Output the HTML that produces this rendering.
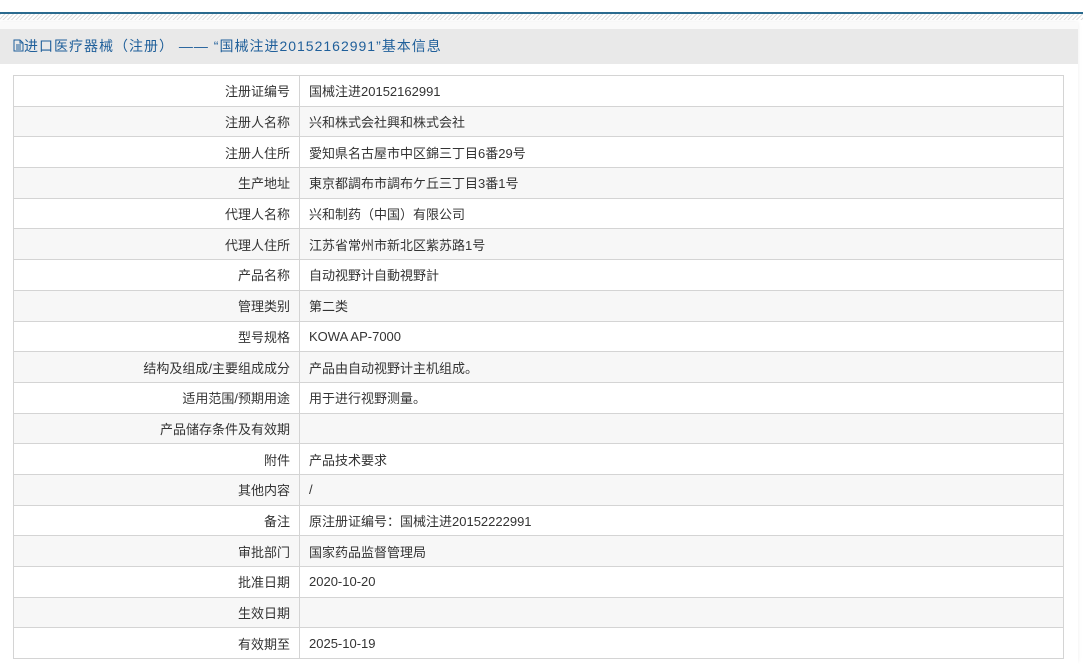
<!DOCTYPE html>
<html><head><meta charset="utf-8"><style>
body{margin:0;background:#fff;font-family:"Liberation Sans","Noto Sans CJK SC",sans-serif;width:1083px;height:657px;overflow:hidden;position:relative}
.line{position:absolute;left:0;top:12px;width:1083px;height:2px;background:#2a6a8e}
.hatch{position:absolute;left:0;top:14px;width:1083px;height:6px;background:repeating-linear-gradient(135deg,#ddd 0 1px,#fff 1px 3px)}
.panel{position:absolute;left:0;top:22px;width:1078px;height:640px;background:#fafafa;box-shadow:0 0 4px #eee}
.head{position:absolute;left:0;top:29px;width:1078px;height:35px;background:#e9e9e9;color:#1f5f9a;font-size:14px;line-height:35px;padding-left:13px;box-sizing:border-box;letter-spacing:1px;white-space:pre}
.wrap{position:absolute;left:0;top:64px;width:1078px;height:600px;background:#fff}
table{position:absolute;left:13px;top:75px;width:1051px;border-collapse:collapse;font-size:13px;color:#333}
td{border:1px solid #d4d4d4;height:30.7px;padding:0 9px;box-sizing:border-box}
td.l{width:286px;text-align:right}
tr:nth-child(even) td{background:#f7f7f7}
</style></head><body>
<div class="line"></div><div class="hatch"></div><div class="panel"></div>
<div class="head"><svg width="11" height="13" viewBox="0 0 11 13" style="vertical-align:-1px"><path d="M1 1h6l3 3v8H1z M7 1v3h3 M3 6h5M3 8h5M3 10h5" fill="none" stroke="#1f5f9a" stroke-width="1"/></svg>进口医疗器械（注册） —— “国械注进20152162991”基本信息</div>
<div class="wrap"></div>
<table>
<tr><td class="l">注册证编号</td><td>国械注进20152162991</td></tr>
<tr><td class="l">注册人名称</td><td>兴和株式会社興和株式会社</td></tr>
<tr><td class="l">注册人住所</td><td>愛知県名古屋市中区錦三丁目6番29号</td></tr>
<tr><td class="l">生产地址</td><td>東京都調布市調布ケ丘三丁目3番1号</td></tr>
<tr><td class="l">代理人名称</td><td>兴和制药（中国）有限公司</td></tr>
<tr><td class="l">代理人住所</td><td>江苏省常州市新北区紫苏路1号</td></tr>
<tr><td class="l">产品名称</td><td>自动视野计自動視野計</td></tr>
<tr><td class="l">管理类别</td><td>第二类</td></tr>
<tr><td class="l">型号规格</td><td>KOWA AP-7000</td></tr>
<tr><td class="l">结构及组成/主要组成成分</td><td>产品由自动视野计主机组成。</td></tr>
<tr><td class="l">适用范围/预期用途</td><td>用于进行视野测量。</td></tr>
<tr><td class="l">产品储存条件及有效期</td><td></td></tr>
<tr><td class="l">附件</td><td>产品技术要求</td></tr>
<tr><td class="l">其他内容</td><td>/</td></tr>
<tr><td class="l">备注</td><td>原注册证编号：国械注进20152222991</td></tr>
<tr><td class="l">审批部门</td><td>国家药品监督管理局</td></tr>
<tr><td class="l">批准日期</td><td>2020-10-20</td></tr>
<tr><td class="l">生效日期</td><td></td></tr>
<tr><td class="l">有效期至</td><td>2025-10-19</td></tr>
</table>
</body></html>
